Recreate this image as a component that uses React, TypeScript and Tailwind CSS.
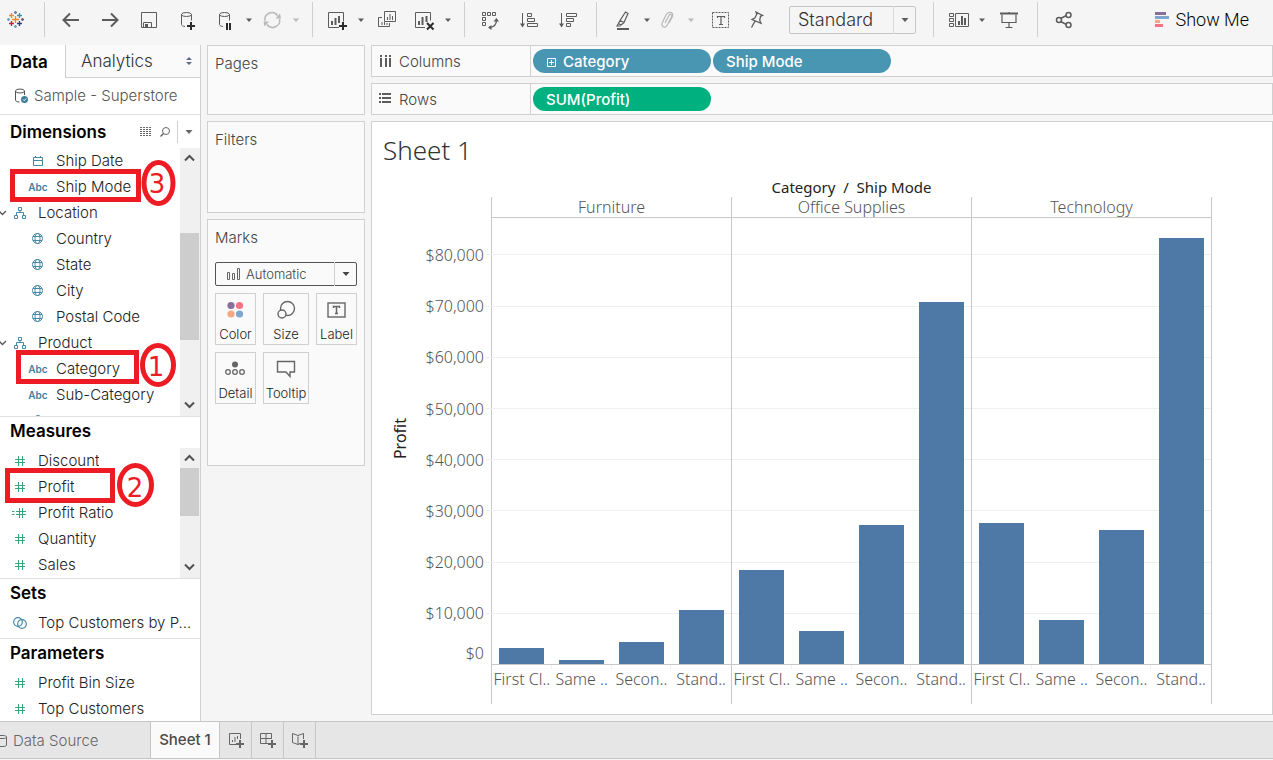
import type { ReactNode } from "react";
import clsx from "clsx";

const PLOT_HEIGHT = 446;
const PX_PER_10K = 51.2;

const columns = [
  { name: "Furniture", values: [3200, 850, 4350, 10450] },
  { name: "Office Supplies", values: [18400, 6500, 27200, 70700] },
  { name: "Technology", values: [27500, 8600, 26200, 83200] },
];
const shipModes = ["First Cl..", "Same ..", "Secon..", "Stand.."];
const ticks = [80, 70, 60, 50, 40, 30, 20, 10];

function Icon({ children, className }: { children: ReactNode; className?: string }) {
  return (
    <svg
      width="24"
      height="24"
      viewBox="0 0 24 24"
      fill="none"
      stroke="currentColor"
      strokeWidth="1"
      aria-hidden="true"
      className={clsx("shrink-0", className)}
    >
      {children}
    </svg>
  );
}

function Caret({ large }: { large?: boolean }) {
  return (
    <svg width="12" height="12" viewBox="0 0 12 12" fill="currentColor" aria-hidden="true">
      <path d={large ? "M2.500 4h7L6 8z" : "M3 4.500h6L6 8z"} />
    </svg>
  );
}

function Tool({ label, children, menu, disabled }: { label: string; children: ReactNode; menu?: boolean; disabled?: boolean }) {
  return (
    <div className={clsx("flex items-center", disabled ? "text-[#b9b9b9]" : "text-[#5c5c5c]")}>
      <button type="button" aria-label={label} disabled={disabled}>
        <Icon>{children}</Icon>
      </button>
      {menu && (
        <button type="button" aria-label={`${label} menu`} disabled={disabled} className="ml-1.5">
          <Caret />
        </button>
      )}
    </div>
  );
}

function Separator() {
  return <div className="h-[35px] w-px shrink-0 bg-[#cfcfcf]" />;
}

function Cylinder({ x }: { x: number }) {
  return (
    <g transform={`translate(${x} 0)`}>
      <ellipse cx="5" cy="6.5" rx="5" ry="2" />
      <path d="M0 6.5v10c0 1 1.200 1.800 3.500 2M10 6.500v6" />
    </g>
  );
}

function TableauLogo() {
  const crosses: [number, number, number, string][] = [
    [12, 12, 3.5, "#e8872b"],
    [8, 8, 2.5, "#d8932f"],
    [16, 8, 2.5, "#4a8ba5"],
    [8, 16, 2.5, "#c72035"],
    [16, 16, 2.5, "#1f447e"],
    [12, 5, 1.5, "#5b879b"],
    [12, 19, 1.5, "#7e9dc0"],
    [5, 12, 1.5, "#7e9dc0"],
    [19, 12, 1.5, "#5a6591"],
  ];
  return (
    <Icon className="mx-1">
      {crosses.map(([x, y, r, color]) => (
        <path
          key={`${x}-${y}`}
          d={`M${x - r} ${y}h${r * 2}M${x} ${y - r}v${r * 2}`}
          stroke={color}
          strokeWidth="1.3"
          transform="translate(-0.5 -0.5)"
        />
      ))}
    </Icon>
  );
}

function Toolbar() {
  return (
    <header className="flex h-[45px] items-start pt-0.5 text-[#5c5c5c]">
      <div className="flex h-[35px] w-full items-center">
        <TableauLogo />
        <div className="ml-3">
          <Separator />
        </div>
        <div className="ml-3.5 flex items-center gap-[15px]">
          <Tool label="Back">
            <path d="M20 12H5M11 5.500 4.500 12l6.500 6.500" strokeWidth="2" />
          </Tool>
          <Tool label="Forward">
            <path d="M4 12h15M13 5.500l6.500 6.500-6.500 6.500" strokeWidth="2" />
          </Tool>
          <Tool label="Save">
            <path d="M4.500 4.500h15v15h-15zM6.500 19.500v-5h8v5" />
            <path d="M8 16h3v4H8z" fill="currentColor" stroke="none" />
          </Tool>
          <Tool label="New data source">
            <Cylinder x={5.5} />
            <path d="M11 18h8M15 14v8" stroke="#2b2b2b" strokeWidth="2" />
          </Tool>
        </div>
        <div className="ml-[13px] flex items-center gap-[5px]">
          <Tool label="Pause auto updates" menu>
            <Cylinder x={6.5} />
            <path d="M14 15v7M17 15v7" stroke="#2b2b2b" strokeWidth="2" />
          </Tool>
          <Tool label="Run update" menu disabled>
            <path d="M5 13a7 7 0 0 1 12.500-5.500M19.500 11a7 7 0 0 1-12.500 5.500" strokeWidth="1.500" />
            <path d="M15.500 10.500h5.500l-1-5zM9 13.500H3.500l1 5z" fill="currentColor" stroke="none" />
          </Tool>
        </div>
        <div className="ml-2.5">
          <Separator />
        </div>
        <div className="ml-3 flex items-center">
          <Tool label="New worksheet" menu>
            <path d="M14 19.500H3.500v-15h15v9" />
            <path d="M7 17v-4M10.500 17v-7M14 15V8" strokeWidth="2" />
            <path d="M14 18h8M18 14v8" stroke="#2b2b2b" strokeWidth="2" />
          </Tool>
          <div className="ml-2 mr-[13px]">
            <Tool label="Duplicate">
              <path d="M9.500 3.500h11v10h-11zM7 9.500H3.500v9h11V15" />
              <path d="M12.500 12V9M15 12V6M17.500 12V8M7 17v-3M9.500 17v-3M12 17v-2" />
            </Tool>
          </div>
          <Tool label="Clear sheet" menu>
            <path d="M13 19.500H3.500v-15h15v8" />
            <path d="M7 17v-4M10.500 17V9M14.500 14V8" strokeWidth="2" />
            <path d="m15 15 6.500 6.500M21.500 15 15 21.500" stroke="#2b2b2b" strokeWidth="2" />
          </Tool>
        </div>
        <div className="ml-2.5">
          <Separator />
        </div>
        <div className="ml-3.5 flex items-center gap-[15px]">
          <Tool label="Swap rows and columns">
            <path d="M3.500 4.500h3v3h-3zM8.500 4.500h3v3h-3zM13.500 4.500h3v3h-3zM3.500 9.500h3v3h-3zM3.500 14.500h3v3h-3z" />
            <path d="M17.500 12c0 4-2.500 7-7 7.500" strokeWidth="1.300" />
            <path d="M14.500 13.500H20l-2.500-3.500zM12.500 17v5L9 19.500z" fill="currentColor" stroke="none" />
          </Tool>
          <Tool label="Sort ascending">
            <path d="M4.500 5v12M9.500 5.500h4v3h-4zM9.500 10.500h7v3h-7zM9.500 15.500h10v3h-10z" />
            <path d="M2 15.500h5l-2.500 4z" fill="currentColor" stroke="none" />
          </Tool>
          <Tool label="Sort descending">
            <path d="M4.500 5v12M9.500 5.500h10v3h-10zM9.500 10.500h7v3h-7zM9.500 15.500h4v3h-4z" />
            <path d="M2 15.500h5l-2.500 4z" fill="currentColor" stroke="none" />
          </Tool>
        </div>
        <div className="ml-[15px]">
          <Separator />
        </div>
        <div className="ml-3.5 flex items-center gap-0.5">
          <Tool label="Highlight" menu>
            <path d="m14.500 4 2.500 1.500-4 9-4-2zM9 12.500l-1.500 3 2.500 1.500 3-2.500M7.500 15.500 6 18h3.500" strokeWidth="1.200" />
            <path d="M6 21h12" strokeWidth="2" />
          </Tool>
          <Tool label="Group members" menu disabled>
            <path
              d="m10 15 4-7.500c1-2 3.500-.8 2.700 1l-4.700 9c-1.500 3-6 1.500-5-2l4-8.500c2-4 8-3.500 6.500 1.500L14 15"
              strokeWidth="1.200"
            />
          </Tool>
        </div>
        <div className="ml-[11px] flex items-center gap-3">
          <Tool label="Show mark labels">
            <rect x="4.500" y="4.500" width="16" height="15" strokeDasharray="2 1" />
            <path d="M9.500 10V8.500h7V10M13 8.500v8M11 16.500h4" strokeWidth="1.200" />
          </Tool>
          <Tool label="Fix axes">
            <path d="m12 4 6.500 3.500-2 .8-.8 4 1.300 3-9-3.800 2.800-1.500 2-3.700zM11 13l-3.500 6.500" strokeWidth="1.300" />
          </Tool>
        </div>
        <div className="relative ml-[21px] flex h-7 w-[127px] items-center">
          <select
            aria-label="Fit"
            defaultValue="Standard"
            className="h-full w-full appearance-none rounded-xs border border-[#c6c6c6] bg-[#f5f5f5] pl-2 text-lg leading-6 text-[#333]"
          >
            <option>Standard</option>
            <option>Fit Width</option>
            <option>Fit Height</option>
            <option>Entire View</option>
          </select>
          <span className="pointer-events-none absolute right-0 flex h-full w-[23px] items-center justify-center border-l border-[#d9d9d9]">
            <Caret large />
          </span>
        </div>
        <div className="ml-[17px]">
          <Separator />
        </div>
        <div className="ml-3 flex items-center gap-[9px]">
          <Tool label="Show cards" menu>
            <path d="M3.500 5.500h4v3h-4zM3.500 10.500h4v3h-4zM3.500 15.500h4v3h-4zM9.500 5.500h13v13h-13z" />
            <path d="M13 17v-4M16 17V8M19 17v-7" strokeWidth="2" />
          </Tool>
          <Tool label="Presentation mode">
            <path d="M3 5.500h18" strokeWidth="2" />
            <path d="M5 6.500v8h14v-8M12 4v1M12 14.500v5M8.500 19.500h7" strokeWidth="1.200" />
          </Tool>
        </div>
        <div className="ml-4">
          <Separator />
        </div>
        <div className="ml-3.5">
          <Tool label="Share">
            <path d="m8.500 10.500 6-3M8.500 13.500l6 3" strokeWidth="1.500" />
            <circle cx="7" cy="12" r="2.500" strokeWidth="1.500" />
            <circle cx="16.500" cy="7" r="2.500" strokeWidth="1.500" />
            <circle cx="16.500" cy="17" r="2.500" strokeWidth="1.500" />
          </Tool>
        </div>
        <button
          type="button"
          className="ml-auto mr-6 flex items-center gap-1.5 font-['Roboto','Inter',sans-serif] text-lg leading-6 font-light text-black"
        >
          <svg width="15" height="16" viewBox="0 0 15 16" aria-hidden="true">
            <path d="M0 0h11v3H0z" fill="#8a6f9a" />
            <path d="M0 4h14v3H0z" fill="#7fa6cd" />
            <path d="M0 8h5v3H0z" fill="#f2a983" />
            <path d="M0 12h8v3H0z" fill="#fb7185" />
          </svg>
          Show Me
        </button>
      </div>
    </header>
  );
}

type FieldKind = "date" | "text" | "tree" | "geo" | "number" | "calc" | "set" | "group";

function FieldIcon({ kind }: { kind: FieldKind }) {
  if (kind === "text") {
    return <span className="text-[10px] leading-4 font-semibold text-[#3f7f9c]">Abc</span>;
  }
  return (
    <svg
      width="16"
      height="16"
      viewBox="0 0 16 16"
      fill="none"
      stroke={kind === "number" || kind === "calc" ? "#3aa37c" : "#4689a6"}
      aria-hidden="true"
    >
      {kind === "date" && <path d="M3.500 4.500h9v8h-9zM3.500 7.500h9M5.500 3v1.500M10.500 3v1.500" />}
      {kind === "tree" && (
        <path d="M6.500 2.500h3v3h-3zM8 5.500v2M4.500 10V7.500h7V10M2.500 10.500h3v3h-3zM10.500 10.500h3v3h-3z" />
      )}
      {kind === "geo" && (
        <>
          <circle cx="7.500" cy="7.500" r="5" />
          <ellipse cx="7.500" cy="7.500" rx="2.500" ry="5" />
          <path d="M3 5.500h9M3 9.500h9" />
        </>
      )}
      {kind === "number" && <path d="M6.500 3v10M10.500 3v10M3 6.500h10M3 9.500h10" />}
      {kind === "calc" && <path d="M7.500 3v10M10.500 3v10M4 6.500h10M4 9.500h10M0 6.500h2.500M0 9.500h2.500" />}
      {kind === "set" && (
        <>
          <circle cx="6" cy="7" r="4.300" strokeWidth="1.200" />
          <circle cx="10" cy="9" r="4.300" strokeWidth="1.200" />
        </>
      )}
      {kind === "group" && <path d="M5.500 8V4c0-2 5-2 5 0v7" />}
    </svg>
  );
}

function Field({ name, kind, nested }: { name?: string; kind: FieldKind; nested?: boolean }) {
  return (
    <li className={clsx("flex h-[26px] items-center", nested && "pl-[18px]")}>
      <span className="flex w-2 shrink-0 text-[#555]">
        {kind === "tree" && (
          <svg width="8" height="8" viewBox="0 0 8 8" fill="none" stroke="currentColor" aria-hidden="true">
            <path d="m-1 2 3.500 3.500L6 2" strokeWidth="1.300" />
          </svg>
        )}
      </span>
      <span className="flex w-6 shrink-0 justify-center">
        <FieldIcon kind={kind} />
      </span>
      <span className="ml-1.5 truncate">{name}</span>
    </li>
  );
}

function ScrollBar({ thumb }: { thumb: string }) {
  return (
    <div className="flex w-5 shrink-0 flex-col bg-[#f0f0f0] text-[#505050]">
      <svg width="19" height="20" viewBox="0 0 19 20" fill="none" stroke="currentColor" strokeWidth="2" aria-hidden="true">
        <path d="m5 12.500 4.500-4.500 4.500 4.500" />
      </svg>
      <div className={clsx("w-[19px] bg-[#cdcdcd]", thumb)} />
      <svg width="19" height="20" viewBox="0 0 19 20" fill="none" stroke="currentColor" strokeWidth="2" aria-hidden="true" className="mt-auto">
        <path d="m5 6.500 4.500 4.500L14 6.500" />
      </svg>
    </div>
  );
}

function Heading({ children }: { children: ReactNode }) {
  return <h2 className="text-[17px] leading-7 font-semibold text-black">{children}</h2>;
}

/* Numbered steps drawn over the data pane */
function StepMarks() {
  return (
    <svg
      width="200"
      height="480"
      viewBox="0 45 200 480"
      fill="none"
      stroke="#ed1c24"
      strokeWidth="5"
      aria-hidden="true"
      className="pointer-events-none absolute top-0 left-0"
    >
      <rect x="12.500" y="171.500" width="126" height="28" />
      <ellipse cx="158.500" cy="183" rx="14.500" ry="20.500" />
      <rect x="18.500" y="352.500" width="118" height="29" />
      <ellipse cx="158" cy="365" rx="15.500" ry="19.500" />
      <rect x="7.500" y="470.500" width="105" height="30" />
      <ellipse cx="135.500" cy="485" rx="16" ry="19.500" />
      <g fill="#ed1c24" stroke="none" fontSize="26" fontWeight="400" textAnchor="middle" fontFamily="'DejaVu Sans', sans-serif">
        <text x="157" y="193">3</text>
        <text x="156" y="376">1</text>
        <text x="135" y="497">2</text>
      </g>
    </svg>
  );
}

function DataPane() {
  return (
    <aside className="relative flex w-[201px] shrink-0 flex-col overflow-hidden border-r border-[#d0d0d0] bg-white text-[15px] leading-5 text-[#222] *:shrink-0">
      <div className="flex h-[33px] text-[17px]">
        <button type="button" className="w-[65px] pl-2.5 text-left font-semibold text-black">
          Data
        </button>
        <button
          type="button"
          className="flex flex-1 items-center justify-between border-b border-l border-[#d0d0d0] bg-[#fafafa] pr-[7px] pl-[15px] text-[#333]"
        >
          Analytics
          <svg width="8" height="10" viewBox="0 0 8 10" fill="#5f6b85" aria-hidden="true">
            <path d="M1 4h6L4 1zM1 6h6L4 9z" />
          </svg>
        </button>
      </div>
      <div className="flex h-[37px] items-center gap-1 border-b border-[#e0e0e0] pl-3.5 text-[#555]">
        <svg width="16" height="16" viewBox="0 0 16 16" fill="none" stroke="currentColor" aria-hidden="true">
          <ellipse cx="6" cy="3" rx="4.500" ry="2" />
          <path d="M1.500 3v9c0 1 1.500 2 4 2M10.500 3v4" />
          <circle cx="10.500" cy="11.500" r="3.500" fill="#3f7f9c" stroke="none" />
          <path d="m9 11.500 1.200 1.200 2-2.200" stroke="#fff" />
        </svg>
        Sample - Superstore
      </div>

      <div className="flex h-[33px] items-center pl-2.5">
        <Heading>Dimensions</Heading>
        <div className="ml-auto flex items-center text-[#666]">
          <button type="button" aria-label="View data">
            <svg width="13" height="11" viewBox="0 0 13 11" fill="none" stroke="currentColor" aria-hidden="true">
              <path d="M0 1.500h12M0 3.500h12M0 5.500h12M0 7.500h12M0 9.500h12" strokeDasharray="2 1" />
            </svg>
          </button>
          <button type="button" aria-label="Find field" className="ml-1.5">
            <svg width="12" height="12" viewBox="0 0 12 12" fill="none" stroke="currentColor" aria-hidden="true">
              <circle cx="7" cy="5" r="3.500" />
              <path d="M4.500 7.500 1.500 10.500" strokeWidth="1.500" />
            </svg>
          </button>
          <span className="ml-1.5 h-[22px] w-px bg-[#d0d0d0]" />
          <button type="button" aria-label="Dimensions menu" className="mx-[5px]">
            <Caret large />
          </button>
        </div>
      </div>
      <div className="flex h-[269px] overflow-hidden border-b border-[#e0e0e0]">
        <ul className="min-w-0 flex-1">
          <Field name="Ship Date" kind="date" nested />
          <Field name="Ship Mode" kind="text" nested />
          <Field name="Location" kind="tree" />
          <Field name="Country" kind="geo" nested />
          <Field name="State" kind="geo" nested />
          <Field name="City" kind="geo" nested />
          <Field name="Postal Code" kind="geo" nested />
          <Field name="Product" kind="tree" />
          <Field name="Category" kind="text" nested />
          <Field name="Sub-Category" kind="text" nested />
          <Field kind="group" nested />
        </ul>
        <ScrollBar thumb="mt-[65px] h-[107px]" />
      </div>

      <div className="h-[31px] pl-2.5">
        <Heading>Measures</Heading>
      </div>
      <div className="flex h-[131px] border-b border-[#e0e0e0]">
        <ul className="min-w-0 flex-1">
          <Field name="Discount" kind="number" />
          <Field name="Profit" kind="number" />
          <Field name="Profit Ratio" kind="calc" />
          <Field name="Quantity" kind="number" />
          <Field name="Sales" kind="number" />
        </ul>
        <ScrollBar thumb="h-12" />
      </div>

      <div className="h-[31px] pl-2.5">
        <Heading>Sets</Heading>
      </div>
      <ul className="h-[29px] border-b border-[#e0e0e0]">
        <Field name="Top Customers by P..." kind="set" />
      </ul>

      <div className="h-[31px] pl-2.5">
        <Heading>Parameters</Heading>
      </div>
      <ul>
        <Field name="Profit Bin Size" kind="number" />
        <Field name="Top Customers" kind="number" />
      </ul>
      <StepMarks />
    </aside>
  );
}

function MarkButton({ label, children }: { label: string; children: ReactNode }) {
  return (
    <button
      type="button"
      className="flex h-[52px] flex-col items-center justify-between border border-[#d0d0d0] pt-1 text-[13px] leading-5 text-[#222]"
    >
      <Icon className="text-[#666]">{children}</Icon>
      {label}
    </button>
  );
}

function Cards() {
  return (
    <div className="ml-1.5 flex w-[158px] shrink-0 flex-col gap-1.5 text-[15px] leading-5 text-[#444]">
      <section className="h-[70px] border border-[#d0d0d0] bg-[#fafafa] px-[7px] pt-2">
        <h3>Pages</h3>
      </section>
      <section className="h-[92px] border border-[#d0d0d0] bg-[#fafafa] px-[7px] pt-2">
        <h3>Filters</h3>
      </section>
      <section className="h-[247px] border border-[#d0d0d0] bg-[#fafafa] px-[7px] pt-2">
        <h3>Marks</h3>
        <div className="relative mt-3.5 flex h-6 items-center">
          <select
            aria-label="Mark type"
            defaultValue="Automatic"
            className="h-full w-full appearance-none rounded-xs border border-[#555] pl-[30px] text-[13px] leading-5"
          >
            <option>Automatic</option>
            <option>Bar</option>
            <option>Line</option>
          </select>
          <svg
            width="14"
            height="12"
            viewBox="0 0 14 12"
            fill="none"
            stroke="#666"
            aria-hidden="true"
            className="pointer-events-none absolute left-[11px]"
          >
            <path d="M1.500 4.500h2v7h-2zM6.500 5.500h2v6h-2zM11.500.5h2v11h-2z" />
          </svg>
          <span className="pointer-events-none absolute right-0 flex h-full w-[23px] items-center justify-center border-l border-[#d0d0d0]">
            <Caret large />
          </span>
        </div>
        <div className="mt-[7px] grid grid-cols-[41px_46px_41px] gap-[7px]">
          <MarkButton label="Color">
            <g stroke="none">
              <circle cx="7" cy="7.500" r="3.600" fill="#8a6f9a" />
              <circle cx="15.500" cy="7.500" r="3.600" fill="#fb7185" />
              <circle cx="7" cy="16" r="3.600" fill="#f2a983" />
              <circle cx="15.500" cy="16" r="3.600" fill="#7fa6cd" />
            </g>
          </MarkButton>
          <MarkButton label="Size">
            <circle cx="13.500" cy="10.500" r="7" strokeWidth="1.400" />
            <circle cx="8" cy="16" r="4" fill="#fafafa" strokeWidth="1.400" />
          </MarkButton>
          <MarkButton label="Label">
            <rect x="3" y="5" width="17" height="14" strokeWidth="1.400" />
            <path d="M8.500 10V8.500h6V10M11.500 8.500v7M10 15.500h3" strokeWidth="1.500" />
          </MarkButton>
          <MarkButton label="Detail">
            <circle cx="11" cy="7.500" r="3" fill="currentColor" stroke="none" />
            <circle cx="4" cy="15" r="2.300" strokeWidth="1.300" />
            <circle cx="11" cy="15" r="2.300" strokeWidth="1.300" />
            <circle cx="18" cy="15" r="2.300" strokeWidth="1.300" />
          </MarkButton>
          <MarkButton label="Tooltip">
            <path d="M3.500 4.500h17V15H16v4.500L12 15H3.500z" strokeWidth="1.400" />
          </MarkButton>
        </div>
      </section>
    </div>
  );
}

function Shelf({ label, icon, children }: { label: string; icon: string; children: ReactNode }) {
  return (
    <div className="flex h-8 border border-[#d0d0d0] bg-[#fafafa] text-[15px] leading-5">
      <div className="flex w-[159px] shrink-0 items-center gap-2 border-r border-[#d0d0d0] pl-[7px] text-[#444]">
        <svg width="12" height="12" viewBox="0 0 12 12" fill="none" stroke="#5c5c5c" strokeWidth="2" aria-hidden="true">
          <path d={icon} />
        </svg>
        <span className="pt-0.5">{label}</span>
      </div>
      <div className="flex items-center gap-0.5 pl-0.5 font-medium text-white">{children}</div>
    </div>
  );
}

function Pill({ color, children }: { color: string; children: ReactNode }) {
  return (
    <button type="button" className={clsx("flex h-6 w-[178px] items-center rounded-full px-[13px] pt-0.5", color)}>
      {children}
    </button>
  );
}

function Chart() {
  return (
    <div className="flex pr-[60px] text-base leading-5 font-light text-[#555]">
      <div className="flex w-[38px] items-center justify-end pt-[51px] pb-[54px]">
        <span className="rotate-180 font-normal text-[#222] [writing-mode:vertical-rl]">Profit</span>
      </div>
      <div className="w-[81px] pt-[68px] pr-[7px] text-right">
        {ticks.map((t) => (
          <div key={t} style={{ height: PX_PER_10K }}>
            ${t},000
          </div>
        ))}
        <div className="-mt-3">$0</div>
      </div>
      <div className="flex-1">
        <div className="text-center text-[15px] font-normal text-[#222]">Category&nbsp; /&nbsp; Ship Mode</div>
        <div className="flex border-l border-[#c8c8c8]">
          {columns.map((col, c) => (
            <div key={col.name} className="flex-1 border-r border-[#c8c8c8]">
              <div className="h-[21px] border-b border-[#c8c8c8] text-center">{col.name}</div>
              <div className="relative flex items-end border-b border-[#c8c8c8]" style={{ height: PLOT_HEIGHT + 1 }}>
                {ticks.map((t) => (
                  <div
                    key={t}
                    className={clsx("absolute right-0 h-px bg-[#efefef]", c === 0 ? "-left-1.5" : "left-0")}
                    style={{ bottom: Math.round((t / 10) * PX_PER_10K) - 1 }}
                  />
                ))}
                {col.values.map((v, i) => (
                  <div key={shipModes[i]} className="relative flex flex-1 justify-center">
                    <div className="w-3/4 bg-[#4e79a7]" style={{ height: Math.round((v / 10000) * PX_PER_10K) }} />
                  </div>
                ))}
              </div>
              <div className="flex h-[39px]">
                {shipModes.map((mode, i) => (
                  <div key={mode} className="w-1/4 whitespace-nowrap">
                    <div className={clsx("h-1 border-[#efefef]", i < 3 && "border-r")} />
                    <div className="text-center">{mode}</div>
                  </div>
                ))}
              </div>
            </div>
          ))}
        </div>
      </div>
    </div>
  );
}

function Worksheet() {
  return (
    <main className="ml-1.5 flex min-w-0 flex-1 flex-col gap-1.5">
      <Shelf label="Columns" icon="M2 0v2M7 0v2M11 0v2M2 3v9M7 3v9M11 3v9">
        <Pill color="bg-[#4996b2]">
          <svg width="11" height="11" viewBox="0 0 11 11" fill="none" stroke="currentColor" aria-hidden="true" className="mr-1.5">
            <path d="M1.500 1.500h8v8h-8zM5.500 3v5M3 5.500h5" />
          </svg>
          Category
        </Pill>
        <Pill color="bg-[#4996b2]">Ship Mode</Pill>
      </Shelf>
      <Shelf label="Rows" icon="M0 1h2M3 1h9M0 5h2M3 5h9M0 9h2M3 9h9">
        <Pill color="bg-[#00b180]">SUM(Profit)</Pill>
      </Shelf>
      <section className="h-[594px] border border-[#d0d0d0] bg-white font-['Noto_Sans','Open_Sans',sans-serif]">
        <h1 className="px-[11px] pt-3 pb-[11px] text-[26px] leading-8 font-light text-[#333]">Sheet 1</h1>
        <Chart />
      </section>
    </main>
  );
}

function NewTab({ label, d }: { label: string; d: string }) {
  return (
    <button type="button" aria-label={label} className="flex w-8 items-center justify-center border-r border-[#c6c6c6]">
      <svg width="18" height="18" viewBox="0 0 18 18" fill="none" stroke="currentColor" aria-hidden="true">
        <path d={d} />
        <path d="M9 13h8M13 9v8" strokeWidth="2" />
      </svg>
    </button>
  );
}

function SheetTabs() {
  return (
    <footer className="flex h-[38px] border-y border-[#c6c6c6] bg-[#e6e6e6] text-[15px] leading-5 text-[#666]">
      <button type="button" className="flex w-[150px] items-center gap-1.5 pt-0.5">
        <svg width="7" height="14" viewBox="0 0 7 14" fill="none" stroke="currentColor" aria-hidden="true">
          <path d="M0 1.500h3c2 0 3.500.5 3.500 1.500S5 4.500 3 4.500H0M6.500 3v8c0 1-1.500 1.500-3.500 1.500H0" />
        </svg>
        Data Source
      </button>
      <button type="button" className="w-[70px] border-x border-[#c6c6c6] bg-[#fafafa] font-medium text-[#4a4a4a]">
        Sheet 1
      </button>
      <NewTab label="New worksheet" d="M9 13.500H2.500v-11h11V8M5.500 11V9M8 11V6M10.500 8V5" />
      <NewTab label="New dashboard" d="M9 12.500H1.500v-10h11V8M7 2.500v10M1.500 7.500h11" />
      <NewTab label="New story" d="M7 5.500v8l-5.500-2v-9l5.500 2 5.500-2V8M7 13.500l2-1" />
    </footer>
  );
}

export default function App() {
  return (
    <div className="min-h-screen bg-[#f5f5f5] font-['Inter','Roboto',sans-serif] font-light">
      <Toolbar />
      <div className="flex h-[676px]">
        <DataPane />
        <Cards />
        <Worksheet />
      </div>
      <SheetTabs />
    </div>
  );
}
